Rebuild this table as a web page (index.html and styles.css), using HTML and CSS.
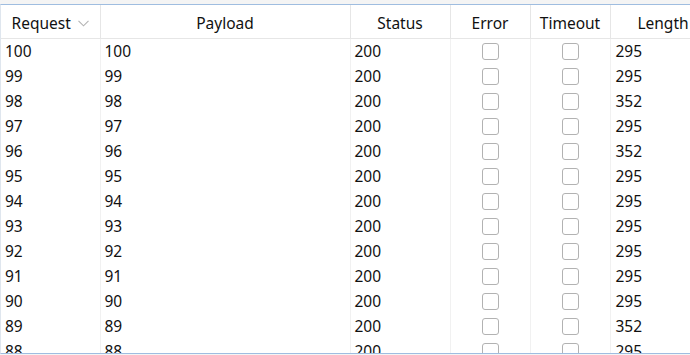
FILE: index.html
```html
<!DOCTYPE html>
<html lang="en">
  <head>
    <meta charset="UTF-8" />
    <title>Results</title>
    <link rel="stylesheet" href="styles.css">
  </head>
  <body>
    <div class="results">
      <table class="grid">
        <colgroup>
          <col class="c-request" />
          <col class="c-payload" />
          <col class="c-status" />
          <col class="c-error" />
          <col class="c-timeout" />
          <col class="c-length" />
        </colgroup>
        <thead>
          <tr>
            <th>
              <span class="sort">Request
                <svg class="sort-icon" width="11" height="7" viewBox="0 0 11 7">
                  <polyline points="0.5,0.8 5.5,5.8 10.5,0.8" fill="none" stroke="#b4b4b4" stroke-width="1.1" />
                </svg>
              </span>
            </th>
            <th>Payload</th>
            <th>Status</th>
            <th>Error</th>
            <th>Timeout</th>
            <th>Length</th>
          </tr>
        </thead>
        <tbody id="rows"></tbody>
      </table>
    </div>

    <script>
      // response lengths per request, newest first
      const lengths = {
        98: 352, 96: 352, 89: 352
      };

      const tbody = document.getElementById("rows");
      for (let n = 100; n >= 88; n--) {
        const tr = document.createElement("tr");
        tr.innerHTML =
          `<td>${n}</td><td>${n}</td><td>200</td>` +
          `<td class="check"><span class="box"></span></td>` +
          `<td class="check"><span class="box"></span></td>` +
          `<td>${lengths[n] || 295}</td>`;
        tbody.appendChild(tr);
      }
    </script>
  </body>
</html>
```

FILE: styles.css
```css
:root {
  --frame: #9fbde0;
  --line: #e6e6e6;
  --line-soft: #f1f1f1;
  --text: #111;
  --box: #b2b2b2;
}

html,
body {
  margin: 0;
  height: 355px;
  overflow: hidden;
}

body {
  background: #f4f4f4;
  padding-top: 4px;
  font-family: "Noto Sans", "Open Sans", sans-serif;
  font-size: 15.5px;
  color: var(--text);
}

.results {
  height: 348px;
  border-top: 1px solid var(--frame);
  border-bottom: 1px solid var(--frame);
  border-left: 1px solid #dfe6ee;
  background: #fff;
  overflow: hidden;
}

.grid {
  border-collapse: collapse;
  table-layout: fixed;
  width: 715px;
}

.c-request { width: 99px; }
.c-payload { width: 250px; }
.c-status { width: 100px; }
.c-error { width: 80px; }
.c-timeout { width: 80px; }
.c-length { width: 106px; }

th {
  height: 30px;
  padding: 3px 0 0;
  font-weight: normal;
  text-align: center;
  border-right: 1px solid var(--line);
  border-bottom: 1px solid var(--line);
  white-space: nowrap;
}

.sort {
  display: inline-flex;
  align-items: center;
  gap: 7px;
}

.sort-icon {
  margin-top: 1px;
}

td {
  height: 25px;
  padding: 0 0 0 4px;
  line-height: 25px;
  border-right: 1px solid var(--line-soft);
  white-space: nowrap;
}

td:last-child {
  padding-left: 5px;
}

td.check {
  padding: 0;
  text-align: center;
}

.box {
  display: inline-block;
  width: 15px;
  height: 15px;
  border: 1px solid var(--box);
  border-radius: 3px;
  background: #fff;
  vertical-align: middle;
  margin-top: -2px;
}
```
